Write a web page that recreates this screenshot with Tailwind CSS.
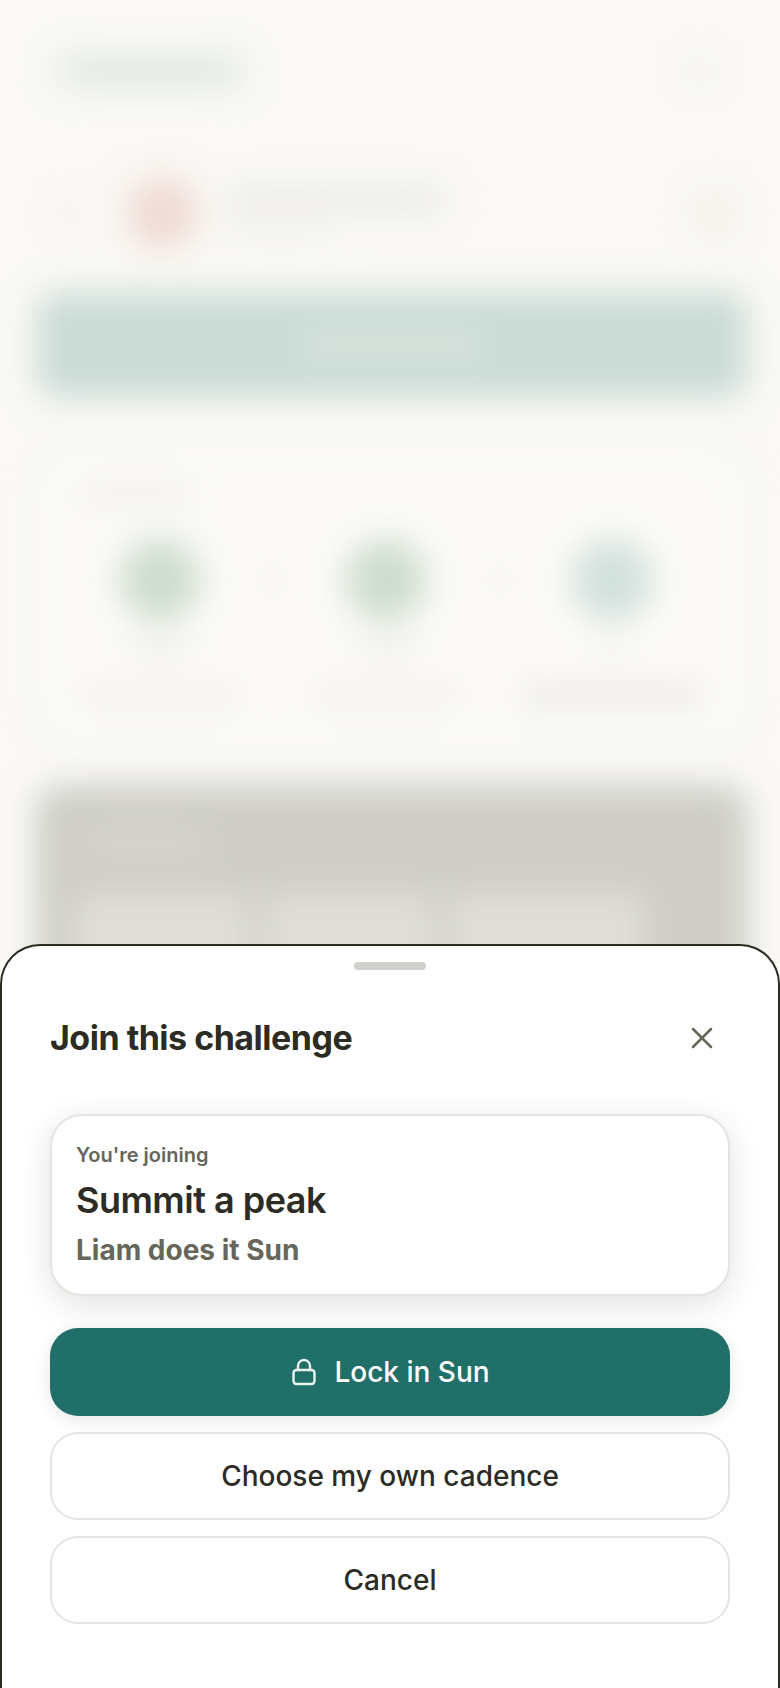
<!DOCTYPE html>
<html lang="en">
<head>
  <meta charset="UTF-8">
  <meta name="viewport" content="width=device-width, initial-scale=1.0">
  <title>Join this challenge</title>
  <script src="https://cdn.jsdelivr.net/npm/@tailwindcss/browser@4"></script>
</head>
<body class="bg-[#faf9f5] font-['Inter',sans-serif]">
  <div class="relative h-[1688px] w-[780px] overflow-hidden bg-[#faf9f5]">

    <!-- Page behind the sheet, blurred -->
    <div class="flex h-full flex-col blur-[16px]">
      <!-- Header -->
      <div class="flex h-[134px] items-center justify-between pl-[58px] pr-[68px] pt-[8px]">
        <div class="h-[32px] w-[186px] rounded-full bg-[#e0e8e4]"></div>
        <div class="size-[24px] rounded-full bg-[#f0f0eb]"></div>
      </div>

      <!-- Profile row -->
      <div class="flex h-[158px] items-center pl-[61px] pr-[43px]">
        <div class="size-[18px] rounded-full bg-[#f8ebe6]"></div>
        <div class="ml-[46px] size-[74px] rounded-full bg-[#f0dbd4]"></div>
        <div class="ml-[26px] flex flex-1 flex-col gap-[14px]">
          <div class="h-[20px] w-[222px] rounded-full bg-[#e9e8e3]"></div>
          <div class="h-[12px] w-[108px] rounded-full bg-[#f0efea]"></div>
        </div>
        <div class="size-[44px] rounded-full bg-[#f5f0ea]"></div>
      </div>

      <!-- Main action -->
      <div class="ml-[36px] mr-[32px] flex h-[106px] items-center justify-center rounded-[24px] bg-[#cbdbd6]">
        <div class="h-[22px] w-[190px] rounded-full bg-[#dbe6df]"></div>
      </div>

      <!-- Progress card -->
      <div class="ml-[40px] mr-[34px] mt-[52px] h-[290px] rounded-[32px] border-2 border-[#f1f0eb] bg-[#fbfaf6] pl-[36px] pt-[34px]">
        <div class="h-[16px] w-[115px] rounded-full bg-[#efeee9]"></div>
        <div class="ml-[25px] mt-[37px] grid w-[565px] grid-cols-5 items-start">
          <div class="flex flex-col items-center">
            <div class="size-[82px] shrink-0 rounded-full bg-[#ceddd0]"></div>
            <div class="mt-[16px] h-[16px] w-[62px] shrink-0 rounded-full bg-[#eeede8]"></div>
            <div class="mt-[33px] h-[18px] w-[166px] shrink-0 rounded-full bg-[#f1f0eb]"></div>
          </div>
          <div class="flex justify-center pt-[28px]"><div class="size-[26px] rounded-full bg-[#f4f3ef]"></div></div>
          <div class="flex flex-col items-center">
            <div class="size-[82px] shrink-0 rounded-full bg-[#ceddd0]"></div>
            <div class="mt-[16px] h-[16px] w-[62px] shrink-0 rounded-full bg-[#eeede8]"></div>
            <div class="mt-[33px] h-[18px] w-[152px] shrink-0 rounded-full bg-[#f1f0eb]"></div>
          </div>
          <div class="flex justify-center pt-[28px]"><div class="size-[26px] rounded-full bg-[#f4f3ef]"></div></div>
          <div class="flex flex-col items-center">
            <div class="size-[82px] shrink-0 rounded-full bg-[#d2e1dd]"></div>
            <div class="mt-[16px] h-[16px] w-[32px] shrink-0 rounded-full bg-[#f1f0eb]"></div>
            <div class="mt-[33px] h-[20px] w-[180px] shrink-0 rounded-full bg-[#e9e8e3]"></div>
          </div>
        </div>
      </div>

      <!-- Dark card, mostly under the sheet -->
      <div class="ml-[36px] mr-[32px] mt-[45px] h-[400px] rounded-[24px] bg-[#cecdc7] pl-[38px] pt-[46px]">
        <div class="ml-[10px] h-[20px] w-[125px] rounded-full bg-[#d8d7d1]"></div>
        <div class="mt-[42px] flex gap-[15px]">
          <div class="h-[80px] w-[175px] rounded-[10px] bg-[#dfded9]"></div>
          <div class="h-[80px] w-[170px] rounded-[10px] bg-[#dfded9]"></div>
          <div class="h-[80px] w-[194px] rounded-[10px] bg-[#dfded9]"></div>
        </div>
      </div>
    </div>

    <!-- Bottom sheet -->
    <div class="absolute inset-x-0 bottom-0 h-[744px] rounded-t-[40px] border-2 border-b-0 border-[#2d2c24] bg-white px-[48px]">
      <div class="mx-auto mt-[16px] h-[8px] w-[72px] rounded-full bg-[#d0cfca]"></div>

      <div class="mt-[36px] flex h-[64px] items-center justify-between">
        <h2 class="text-[34px] font-bold leading-none tracking-[-0.5px] text-[#2d2c24]">Join this challenge</h2>
        <button class="mr-[16px] flex size-[24px] items-center justify-center">
          <svg width="24" height="24" viewBox="0 0 24 24" fill="none" stroke="#66665a" stroke-width="2.5" stroke-linecap="round"><path d="M3 3l18 18M21 3L3 21"/></svg>
        </button>
      </div>

      <div class="mt-[44px] h-[182px] rounded-[32px] border-2 border-[#e5e4e0] bg-white px-[24px] pt-[25px] shadow-[0_8px_32px_rgba(45,44,36,0.14)]">
        <p class="text-[20px] font-semibold leading-[28px] text-[#66665a]">You're joining</p>
        <p class="mt-[9px] text-[36px] font-semibold leading-[44px] tracking-[-0.5px] text-[#2d2c24]">Summit a peak</p>
        <p class="mt-[8px] text-[28px] font-bold leading-[40px] text-[#66665a]">Liam does it Sun</p>
      </div>

      <div class="mt-[32px] flex flex-col gap-[16px]">
        <button class="flex h-[88px] items-center justify-center gap-[16px] rounded-[28px] bg-[#206f68] text-[28px] font-medium text-white shadow-[0_4px_16px_rgba(45,44,36,0.12)]">
          <svg width="28" height="28" viewBox="0 0 28 28" fill="none" stroke="#ecf4f2" stroke-width="2.4" stroke-linecap="round" stroke-linejoin="round"><rect x="3.5" y="12" width="21" height="14" rx="3"/><path d="M8 12V8a6 6 0 0 1 12 0v4"/></svg>
          Lock in Sun
        </button>
        <button class="flex h-[88px] items-center justify-center rounded-[28px] border-2 border-[#e5e4e0] bg-white text-[28px] font-medium text-[#2d2c24]">Choose my own cadence</button>
        <button class="flex h-[88px] items-center justify-center rounded-[28px] border-2 border-[#e5e4e0] bg-white text-[28px] font-medium text-[#2d2c24]">Cancel</button>
      </div>
    </div>
  </div>
</body>
</html>
